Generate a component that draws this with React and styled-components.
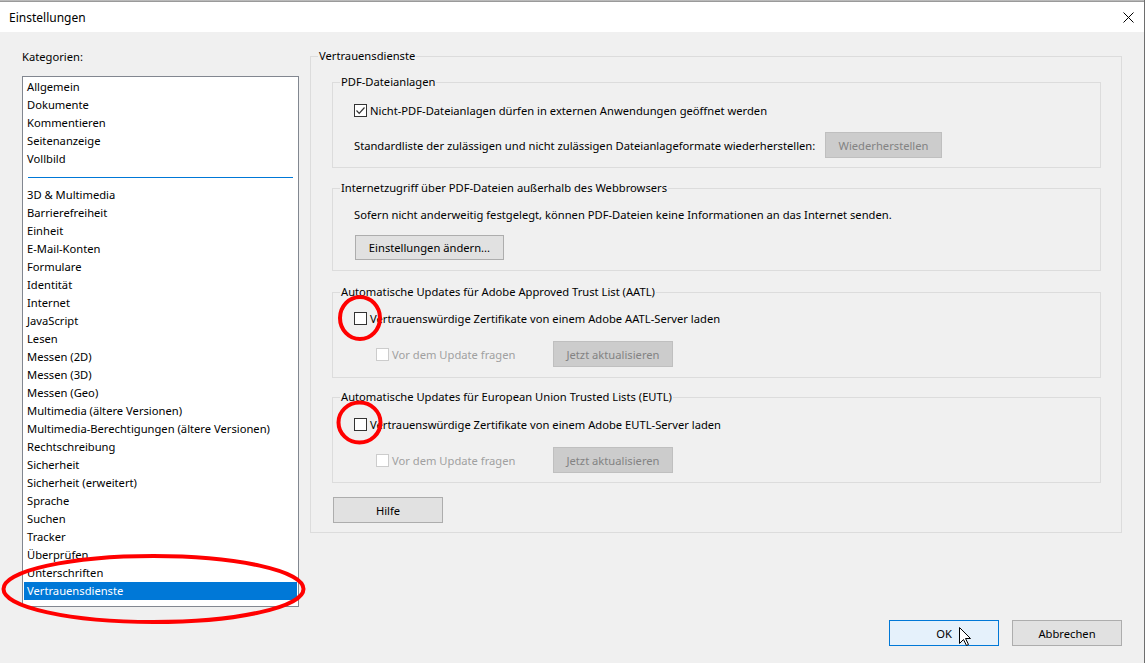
import React from "react";
import styled, { createGlobalStyle } from "styled-components";

const FONT = `"Noto Sans", "Open Sans", "Liberation Sans", sans-serif`;
const SIZE = "11.2px";

const GlobalStyle = createGlobalStyle`
  html, body {
    margin: 0;
    padding: 0;
    background: #f0f0f0;
  }
  body {
    font-family: ${FONT};
    font-size: ${SIZE};
    color: #000;
  }
`;

const Window = styled.div`
  position: relative;
  width: 1145px;
  height: 663px;
  box-sizing: border-box;
  border-right: 1px solid #6e6e6e;
  background: #f0f0f0;
  display: flex;
  flex-direction: column;
  overflow: hidden;
`;

const BehindStrip = styled.div`
  height: 2px;
  background: linear-gradient(#c9c9c9, #8a8a8a);
`;

const TitleBar = styled.div`
  height: 30px;
  background: #fff;
  display: flex;
  align-items: center;
  justify-content: space-between;
  padding: 0 10px 0 9px;
  font-size: 12px;
`;

const Body = styled.div`
  flex: 1;
  display: flex;
  flex-direction: column;
  padding: 16px 22px 0 22px;
`;

const Main = styled.div`
  display: flex;
  gap: 11px;
  align-items: flex-start;
`;

const LeftColumn = styled.div`
  width: 277px;
  padding-top: 1px;
  display: flex;
  flex-direction: column;
`;

const Label = styled.div`
  line-height: 16px;
  white-space: nowrap;
`;

const ListBox = styled.div`
  margin-top: 11px;
  height: 531px;
  box-sizing: border-box;
  border: 1px solid #828790;
  background: #fff;
  padding: 1px;
  overflow: hidden;
`;

const ListItem = styled.div`
  height: 18px;
  line-height: 18px;
  padding-left: 3px;
  white-space: nowrap;
  background: ${(p) => (p.$selected ? "#0078d7" : "transparent")};
  color: ${(p) => (p.$selected ? "#fff" : "#000")};
`;

const ListSeparator = styled.div`
  height: 18px;
  display: flex;
  align-items: center;
  padding: 0 4px;
  &::after {
    content: "";
    flex: 1;
    height: 1px;
    background: #0078d7;
  }
`;

const Group = styled.fieldset`
  margin: ${(p) => p.$mt || 0}px 0 0 0;
  padding: ${(p) => p.$pad};
  border: 1px solid #dcdcdc;
  min-width: 0;
  box-sizing: border-box;
  width: ${(p) => (p.$w ? `${p.$w}px` : "auto")};
`;

const Legend = styled.legend`
  padding: 0 1px;
  margin-left: -14px;
  line-height: 16px;
  white-space: nowrap;
`;

const Row = styled.div`
  display: flex;
  align-items: center;
  height: ${(p) => p.$h || 18}px;
  margin-top: ${(p) => p.$mt || 0}px;
  padding-left: ${(p) => p.$indent || 0}px;
  white-space: nowrap;
`;

const CheckLabel = styled.label`
  display: flex;
  align-items: center;
  gap: 3px;
  color: ${(p) => (p.$disabled ? "#a0a0a0" : "#000")};
  width: ${(p) => (p.$w ? `${p.$w}px` : "auto")};
`;

const Box = styled.span`
  width: 13px;
  height: 13px;
  box-sizing: border-box;
  border: 1px solid ${(p) => (p.$disabled ? "#cccccc" : "#333")};
  background: #fff;
  display: inline-flex;
  align-items: center;
  justify-content: center;
  flex: none;
`;

const FixedText = styled.span`
  width: ${(p) => p.$w}px;
  flex: none;
`;

const Button = styled.button`
  font-family: ${FONT};
  font-size: ${SIZE};
  height: ${(p) => p.$h || 26}px;
  width: ${(p) => p.$w}px;
  margin: ${(p) => p.$m || 0};
  padding: 0;
  box-sizing: border-box;
  border: 1px solid #adadad;
  background: #e1e1e1;
  color: #000;
  flex: none;

  &:disabled {
    background: #cccccc;
    border-color: #bfbfbf;
    color: #838383;
  }
`;

const DefaultButton = styled(Button)`
  border-color: #0078d7;
  background: #e5f1fb;
`;

const Footer = styled.div`
  margin-top: 13px;
  display: flex;
  justify-content: flex-end;
  gap: 13px;
`;

const Overlay = styled.svg`
  position: absolute;
  left: 0;
  top: 0;
  pointer-events: none;
`;

function CheckBox({ checked, disabled }) {
  return (
    <Box $disabled={disabled}>
      {checked && (
        <svg width="11" height="11" viewBox="0 0 11 11">
          <polyline points="1.5,5.5 4.2,8.3 9.5,2.5" fill="none" stroke="#333" strokeWidth="1.2" />
        </svg>
      )}
    </Box>
  );
}

const topItems = ["Allgemein", "Dokumente", "Kommentieren", "Seitenanzeige", "Vollbild"];
const moreItems = [
  "3D & Multimedia",
  "Barrierefreiheit",
  "Einheit",
  "E-Mail-Konten",
  "Formulare",
  "Identität",
  "Internet",
  "JavaScript",
  "Lesen",
  "Messen (2D)",
  "Messen (3D)",
  "Messen (Geo)",
  "Multimedia (ältere Versionen)",
  "Multimedia-Berechtigungen (ältere Versionen)",
  "Rechtschreibung",
  "Sicherheit",
  "Sicherheit (erweitert)",
  "Sprache",
  "Suchen",
  "Tracker",
  "Überprüfen",
  "Unterschriften",
  "Vertrauensdienste",
];

function TrustListGroup({ title, server, mt, pt, pb }) {
  return (
    <Group $mt={mt} $pad={`${pt}px 10px ${pb}px 21px`}>
      <Legend>{title}</Legend>
      <Row>
        <CheckLabel>
          <CheckBox />
          Vertrauenswürdige Zertifikate von einem Adobe {server}-Server laden
        </CheckLabel>
      </Row>
      <Row $h={26} $mt={14} $indent={22}>
        <CheckLabel $disabled $w={177}>
          <CheckBox disabled />
          Vor dem Update fragen
        </CheckLabel>
        <Button $w={120} disabled>
          Jetzt aktualisieren
        </Button>
      </Row>
    </Group>
  );
}

export default function App() {
  return (
    <>
      <GlobalStyle />
      <Window>
        <BehindStrip />
        <TitleBar>
          <span>Einstellungen</span>
          <svg width="11" height="11" viewBox="0 0 11 11">
            <path d="M0.5 0.5 L10.5 10.5 M10.5 0.5 L0.5 10.5" stroke="#000" strokeWidth="1" />
          </svg>
        </TitleBar>
        <Body>
          <Main>
            <LeftColumn>
              <Label>Kategorien:</Label>
              <ListBox>
                {topItems.map((item) => (
                  <ListItem key={item}>{item}</ListItem>
                ))}
                <ListSeparator />
                {moreItems.map((item) => (
                  <ListItem key={item} $selected={item === "Vertrauensdienste"}>
                    {item}
                  </ListItem>
                ))}
              </ListBox>
            </LeftColumn>

            <Group $w={812} $pad="10px 20px 9px 21px">
              <Legend>Vertrauensdienste</Legend>

              <Group $pad="11px 10px 9px 21px">
                <Legend>PDF-Dateianlagen</Legend>
                <Row>
                  <CheckLabel>
                    <CheckBox checked />
                    Nicht-PDF-Dateianlagen dürfen in externen Anwendungen geöffnet werden
                  </CheckLabel>
                </Row>
                <Row $h={26} $mt={13}>
                  <FixedText $w={471}>
                    Standardliste der zulässigen und nicht zulässigen Dateianlageformate wiederherstellen:
                  </FixedText>
                  <Button $w={117} disabled>
                    Wiederherstellen
                  </Button>
                </Row>
              </Group>

              <Group $mt={12} $pad="9px 10px 10px 21px">
                <Legend>Internetzugriff über PDF-Dateien außerhalb des Webbrowsers</Legend>
                <Row>Sofern nicht anderweitig festgelegt, können PDF-Dateien keine Informationen an das Internet senden.</Row>
                <Row $h={25} $mt={12}>
                  <Button $w={149} $h={25} $m="0 0 0 1px">
                    Einstellungen ändern...
                  </Button>
                </Row>
              </Group>

              <TrustListGroup
                title="Automatische Updates für Adobe Approved Trust List (AATL)"
                server="AATL"
                mt={13}
                pt={9}
                pb={10}
              />
              <TrustListGroup
                title="Automatische Updates für European Union Trusted Lists (EUTL)"
                server="EUTL"
                mt={11}
                pt={10}
                pb={9}
              />

              <Row $h={26} $mt={14}>
                <Button $w={110} $m="0 0 0 1px">
                  Hilfe
                </Button>
              </Row>
            </Group>
          </Main>

          <Footer>
            <DefaultButton $w={110}>OK</DefaultButton>
            <Button $w={110}>Abbrechen</Button>
          </Footer>
        </Body>

        <Overlay width="1145" height="663" viewBox="0 0 1145 663">
          <g fill="none" stroke="#ff0000" strokeWidth="4">
            <ellipse cx="153.5" cy="589" rx="150" ry="33" />
            <ellipse cx="360" cy="318" rx="20" ry="21" />
            <ellipse cx="359.5" cy="422.5" rx="21" ry="20" />
          </g>
          <path
            d="M959.5 627.5 L959.5 643.5 L963.5 639.5 L966.5 645.5 L968.5 644.5 L965.5 638.5 L970.5 638.5 Z"
            fill="#fff"
            stroke="#000"
            strokeWidth="1"
            strokeLinejoin="round"
          />
        </Overlay>
      </Window>
    </>
  );
}
